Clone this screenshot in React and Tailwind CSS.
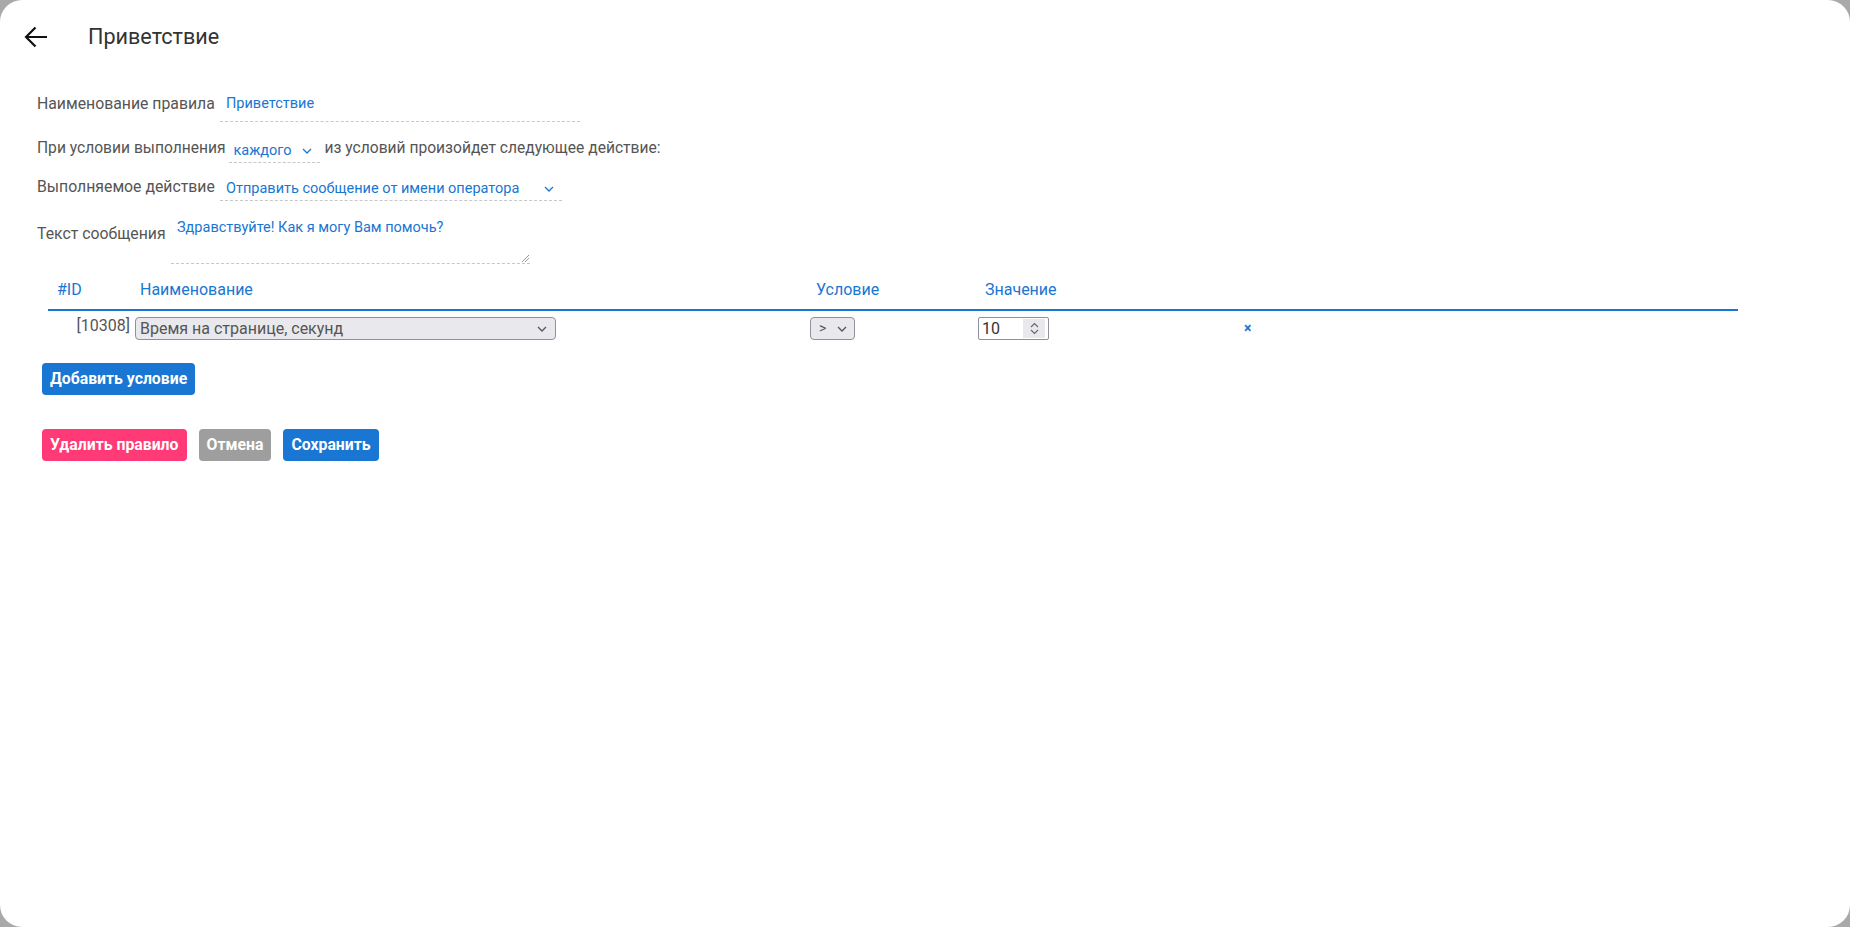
import React from "react";

function ArrowBack() {
  return (
    <svg width="24" height="22" viewBox="0 0 24 22" fill="none" stroke="#111" strokeWidth="2.2" strokeLinecap="butt">
      <path d="M2 11H23" />
      <path d="M11.5 1.5L2 11l9.5 9.5" />
    </svg>
  );
}

function Chevron({ color = "#1976d2", size = 10 }) {
  return (
    <svg width={size} height={size * 0.6} viewBox="0 0 10 6" fill="none" stroke={color} strokeWidth="1.3">
      <path d="M1 1l4 4 4-4" />
    </svg>
  );
}

export default function App() {
  return (
    <div className="w-[1850px] h-[927px] bg-[#a9a9a9] font-['Roboto',sans-serif]">
      <div className="w-full h-full bg-white rounded-[22px] overflow-hidden">
        {/* header */}
        <div className="h-[74px] flex items-center pl-[24px]">
          <ArrowBack />
          <span className="ml-[40px] text-[21.6px] text-[#333]">Приветствие</span>
        </div>

        <div className="pl-[37px] pt-[12px]">
          {/* row 1 */}
          <div className="flex items-center h-[36px]">
            <span className="text-[15.8px] text-[#555] w-[183px]">Наименование правила</span>
            <div className="w-[360px] h-[36px] border-b border-dashed border-[#c8c8c8] flex items-center pl-[6px] text-[14.5px] text-[#1976d2]">
              Приветствие
            </div>
          </div>

          {/* row 2 */}
          <div className="flex items-center h-[24px] mt-[15px] text-[15.6px] text-[#555]">
            <span>При условии выполнения</span>
            <div className="ml-[3px] w-[91px] h-[24px] border-b border-dashed border-[#c8c8c8] flex items-center justify-between pl-[5px] pr-[8px] mt-[4px] text-[14.5px] text-[#1976d2]">
              <span>каждого</span>
              <Chevron />
            </div>
            <span className="ml-[5px]">из условий произойдет следующее действие:</span>
          </div>

          {/* row 3 */}
          <div className="flex items-center h-[24px] mt-[14px]">
            <span className="text-[15.8px] text-[#555] w-[183px]">Выполняемое действие</span>
            <div className="w-[342px] h-[24px] border-b border-dashed border-[#c8c8c8] flex items-center justify-between pl-[6px] pr-[8px] mt-[4px] text-[14.5px] text-[#1976d2]">
              <span>Отправить сообщение от имени оператора</span>
              <Chevron />
            </div>
          </div>

          {/* row 4 */}
          <div className="flex mt-[16px]">
            <span className="text-[15.8px] text-[#555] w-[134px] pt-[7px]">Текст сообщения</span>
            <div className="relative w-[359px] h-[49px] border-b border-dashed border-[#c8c8c8] pl-[6px] pt-[2px] text-[14.5px] text-[#1976d2]">
              Здравствуйте! Как я могу Вам помочь?
              <svg className="absolute right-[1px] bottom-[1px]" width="7" height="7" viewBox="0 0 7 7" stroke="#999" strokeWidth="1">
                <path d="M7 0L0 7M7 3L3 7" />
              </svg>
            </div>
          </div>
        </div>

        {/* table */}
        <div className="ml-[48px] w-[1690px] mt-[7px]">
          <div className="flex items-center h-[40px] border-b-2 border-[#1976d2] text-[16px] text-[#1976d2]">
            <div className="w-[87px] pl-[9px]">#ID</div>
            <div className="w-[675px] pl-[5px]">Наименование</div>
            <div className="w-[168px] pl-[6px]">Условие</div>
            <div className="w-[170px] pl-[7px]">Значение</div>
          </div>
          <div className="flex items-start pt-[6px] h-[38px]">
            <div className="w-[87px] text-right pr-[5px] text-[16px] text-[#555] leading-[20px] -mt-[1px]">[10308]</div>
            <div className="w-[675px]">
              <div className="w-[421px] h-[23px] rounded-[4px] border border-[#8f8f9d] bg-[#e9e9ed] flex items-center justify-between pl-[4px] pr-[8px] text-[16px] text-[#555]">
                <span>Время на странице, секунд</span>
                <Chevron color="#555" />
              </div>
            </div>
            <div className="w-[168px]">
              <div className="w-[45px] h-[23px] rounded-[4px] border border-[#8f8f9d] bg-[#e9e9ed] flex items-center justify-between pl-[8px] pr-[7px] text-[14px] text-[#555]">
                <span>&gt;</span>
                <Chevron color="#555" />
              </div>
            </div>
            <div className="w-[266px]">
              <div className="w-[71px] h-[23px] rounded-[2px] border border-[#8f8f9d] bg-white flex items-center pl-[3px] pr-[3px] text-[16px] text-[#333]">
                <span className="flex-1">10</span>
                <div className="w-[22px] h-[19px] bg-[#e9e9ed] flex flex-col items-center justify-center gap-[1px]">
                  <svg width="9" height="6" viewBox="0 0 9 6" fill="none" stroke="#666" strokeWidth="1.1"><path d="M1 5l3.5-3.5L8 5" /></svg>
                  <svg width="9" height="6" viewBox="0 0 9 6" fill="none" stroke="#666" strokeWidth="1.1"><path d="M1 1l3.5 3.5L8 1" /></svg>
                </div>
              </div>
            </div>
            <div className="text-[#1976d2] text-[14px] font-bold leading-[23px]">×</div>
          </div>
        </div>

        <div className="pl-[42px] mt-[14px]">
          <button className="h-[32px] px-[8px] rounded-[4px] bg-[#1976d2] text-white text-[15.8px] font-bold">Добавить условие</button>
          <div className="flex gap-[12px] mt-[34px]">
            <button className="h-[32px] px-[8px] rounded-[4px] bg-[#ff3a76] text-white text-[15.8px] font-bold">Удалить правило</button>
            <button className="h-[32px] px-[8px] rounded-[4px] bg-[#9e9e9e] text-white text-[15.8px] font-bold">Отмена</button>
            <button className="h-[32px] px-[8px] rounded-[4px] bg-[#1976d2] text-white text-[15.8px] font-bold">Сохранить</button>
          </div>
        </div>
      </div>
    </div>
  );
}
